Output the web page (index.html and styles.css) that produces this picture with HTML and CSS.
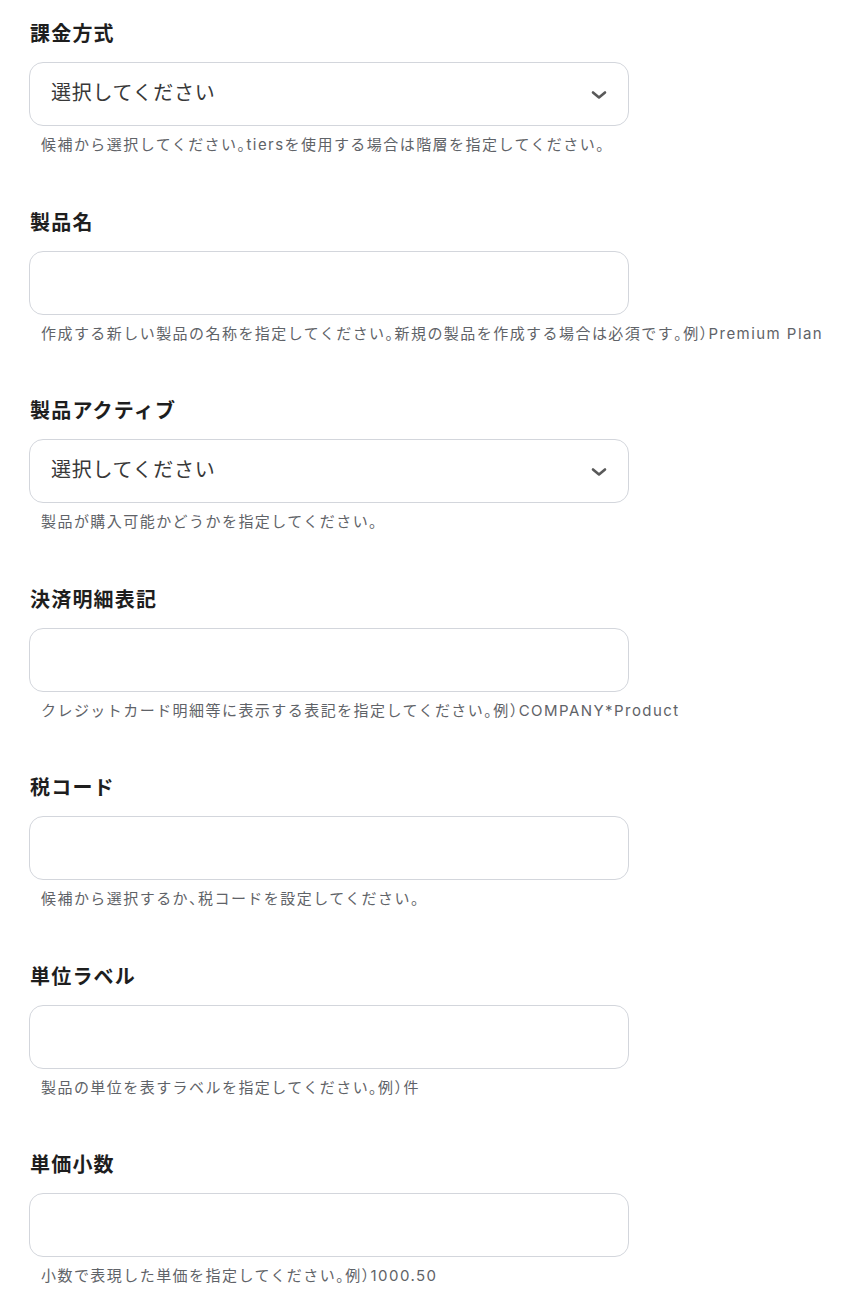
FILE: index.html
```html
<!DOCTYPE html>
<html lang="ja">
<head>
<meta charset="utf-8">
<title>Form</title>
<link rel="stylesheet" href="styles.css">
</head>
<body>
<form class="form">
  <div class="field">
    <div class="label">課金方式</div>
    <div class="box select">
      <span class="placeholder">選択してください</span>
      <svg class="chev" width="16" height="10" viewBox="0 0 16 10"><path d="M2 2.5 L8 7.5 L14 2.5" fill="none" stroke="#595959" stroke-width="2.6" stroke-linecap="round" stroke-linejoin="round"/></svg>
    </div>
    <div class="help">候補から選択してください<span class="h">。</span>tiersを使用する場合は階層を指定してください。</div>
  </div>
  <div class="field">
    <div class="label">製品名</div>
    <div class="box"></div>
    <div class="help">作成する新しい製品の名称を指定してください<span class="h">。</span>新規の製品を作成する場合は必須です<span class="h">。</span>例<span class="h">）</span>Premium Plan</div>
  </div>
  <div class="field">
    <div class="label">製品アクティブ</div>
    <div class="box select">
      <span class="placeholder">選択してください</span>
      <svg class="chev" width="16" height="10" viewBox="0 0 16 10"><path d="M2 2.5 L8 7.5 L14 2.5" fill="none" stroke="#595959" stroke-width="2.6" stroke-linecap="round" stroke-linejoin="round"/></svg>
    </div>
    <div class="help">製品が購入可能かどうかを指定してください。</div>
  </div>
  <div class="field">
    <div class="label">決済明細表記</div>
    <div class="box"></div>
    <div class="help">クレジットカード明細等に表示する表記を指定してください<span class="h">。</span>例<span class="h">）</span>COMPANY*Product</div>
  </div>
  <div class="field">
    <div class="label">税コード</div>
    <div class="box"></div>
    <div class="help">候補から選択するか<span class="h">、</span>税コードを設定してください。</div>
  </div>
  <div class="field">
    <div class="label">単位ラベル</div>
    <div class="box"></div>
    <div class="help">製品の単位を表すラベルを指定してください<span class="h">。</span>例<span class="h">）</span>件</div>
  </div>
  <div class="field">
    <div class="label">単価小数</div>
    <div class="box"></div>
    <div class="help">小数で表現した単価を指定してください<span class="h">。</span>例<span class="h">）</span>1000.50</div>
  </div>
</form>
</body>
</html>
```

FILE: styles.css
```css
html, body {
  margin: 0;
  padding: 0;
  background: #ffffff;
}

body {
  font-family: "Noto Sans CJK JP", "Noto Sans", sans-serif;
  color: #222222;
}

.form {
  display: flex;
  flex-direction: column;
  gap: 50.5px;
  padding: 18px 0 0 29px;
}

.field {
  display: flex;
  flex-direction: column;
  width: 600px;
}

.label {
  font-size: 20px;
  font-weight: 700;
  line-height: 30px;
  letter-spacing: 1.2px;
  color: #1e1e1e;
  padding-left: 1px;
  margin-bottom: 14px;
}

.box {
  box-sizing: border-box;
  width: 600px;
  height: 64px;
  border: 1px solid #d3d6dc;
  border-radius: 14px;
  background: #ffffff;
}

.select {
  display: flex;
  align-items: center;
  justify-content: space-between;
  padding: 0 21px 0 21px;
}

.placeholder {
  font-size: 20px;
  letter-spacing: 0.7px;
  color: #383838;
  line-height: 30px;
  margin-top: -4px;
}

.chev {
  display: block;
  margin-top: 2px;
}

.help {
  font-family: Inter, "Noto Sans CJK JP", sans-serif;
  font-size: 15px;
  line-height: 22px;
  letter-spacing: 1.45px;
  color: #5f6368;
  margin-top: 8px;
  padding-left: 12px;
  white-space: nowrap;
}

.help .h {
  font-feature-settings: "halt";
}
```
